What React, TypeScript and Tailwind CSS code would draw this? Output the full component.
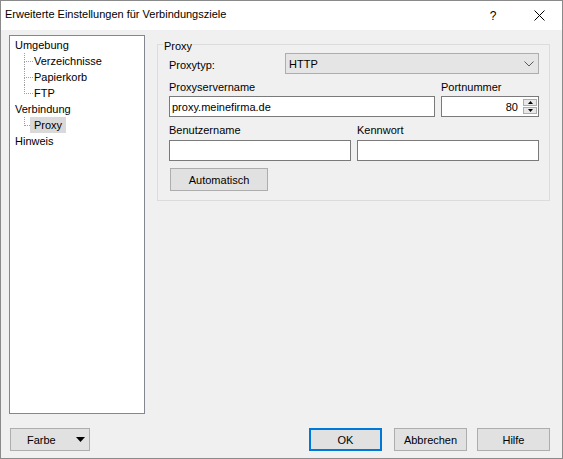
import React from "react";

function Child({ label, last, selected }: { label: string; last?: boolean; selected?: boolean }) {
  return (
    <div className="flex h-[16px] ml-[9px]">
      <div className={selected ? "flex flex-col w-[6px]" : "flex flex-col w-[9px]"}>
        <div className="h-[9px] border-l border-b border-dotted border-[#a0a0a0]" />
        <div className={last ? "flex-1" : "flex-1 border-l border-dotted border-[#a0a0a0]"} />
      </div>
      <span className={selected ? "bg-[#d9d9d9] px-[4px]" : "pl-[1px]"}>{label}</span>
    </div>
  );
}

function Btn({ children, className }: { children: React.ReactNode; className: string }) {
  return (
    <div className={"h-[23px] flex items-center justify-center bg-[#e1e1e1] " + className}>{children}</div>
  );
}

export default function App() {
  return (
    <div className="w-[563px] h-[459px] border border-[#8a8a8a] bg-[#f0f0f0] flex flex-col font-['Liberation_Sans',sans-serif] text-[11px] leading-[16px] text-black">
      {/* Title bar */}
      <div className="h-[29px] bg-white flex items-start shrink-0">
        <div className="pl-[4px] pt-[5px] text-[11px]">Erweiterte Einstellungen für Verbindungsziele</div>
        <div className="ml-auto flex">
          <div className="w-[46px] h-[29px] flex items-center justify-center text-[12px]">?</div>
          <div className="w-[46px] h-[29px] flex items-center justify-center">
            <svg width="11" height="11" viewBox="0 0 11 11">
              <path d="M0.5 0.5 L10.5 10.5 M10.5 0.5 L0.5 10.5" stroke="#000" strokeWidth="1" fill="none" />
            </svg>
          </div>
        </div>
      </div>

      {/* Main */}
      <div className="flex pl-[8px] pt-[5px]">
        <div className="w-[136px] h-[379px] border border-[#828790] bg-white pt-[1px] pl-[5px]">
          <div className="h-[16px]">Umgebung</div>
          <Child label="Verzeichnisse" />
          <Child label="Papierkorb" />
          <Child label="FTP" last />
          <div className="h-[16px]">Verbindung</div>
          <Child label="Proxy" last selected />
          <div className="h-[16px]">Hinweis</div>
        </div>

        <div className="ml-[12px] mt-[9px] w-[393px] h-[157px] border border-[#dcdcdc] relative pt-[8px] pl-[11px] pr-[10px]">
          <span className="absolute left-[5px] top-[-7px] px-[1px] bg-[#f0f0f0]">Proxy</span>

          <div className="flex items-center h-[21px]">
            <div className="w-[116px] pt-[2px]">Proxytyp:</div>
            <div className="w-[254px] h-[21px] border border-[#adadad] bg-[#e5e5e5] flex items-center pl-[3px]">
              <span>HTTP</span>
              <svg className="ml-auto mr-[4px]" width="10" height="6" viewBox="0 0 10 6">
                <path d="M0.5 0.5 L5 5 L9.5 0.5" stroke="#5a5a5a" strokeWidth="1" fill="none" />
              </svg>
            </div>
          </div>

          <div className="flex mt-[5px]">
            <div className="w-[272px]">Proxyservername</div>
            <div>Portnummer</div>
          </div>
          <div className="flex mt-[1px] gap-[6px]">
            <div className="w-[266px] h-[21px] border border-[#7a7a7a] bg-white flex items-center pl-[2px]">
              proxy.meinefirma.de
            </div>
            <div className="w-[98px] h-[21px] border border-[#7a7a7a] bg-white flex items-center">
              <span className="flex-1 text-right">80</span>
              <div className="flex flex-col gap-[1px] ml-[5px] mr-[1px]">
                <div className="w-[14px] h-[7px] border border-[#adadad] bg-[#e8e8e8] flex items-center justify-center">
                  <svg width="5" height="3" viewBox="0 0 5 3">
                    <path d="M0 3 L2.5 0 L5 3 Z" fill="#000" />
                  </svg>
                </div>
                <div className="w-[14px] h-[7px] border border-[#adadad] bg-[#e8e8e8] flex items-center justify-center">
                  <svg width="5" height="3" viewBox="0 0 5 3">
                    <path d="M0 0 L5 0 L2.5 3 Z" fill="#000" />
                  </svg>
                </div>
              </div>
            </div>
          </div>

          <div className="flex mt-[5px]">
            <div className="w-[188px]">Benutzername</div>
            <div>Kennwort</div>
          </div>
          <div className="flex mt-[2px] gap-[6px]">
            <div className="w-[182px] h-[21px] border border-[#7a7a7a] bg-white" />
            <div className="w-[182px] h-[21px] border border-[#7a7a7a] bg-white" />
          </div>

          <div className="mt-[7px] ml-[1px]">
            <Btn className="w-[98px] border border-[#adadad]">Automatisch</Btn>
          </div>
        </div>
      </div>

      {/* Footer */}
      <div className="flex mt-[14px] pl-[9px] pr-[12px] h-[23px]">
        <div className="w-[80px] h-[23px] border border-[#adadad] bg-[#e1e1e1] flex items-center pl-[16px]">
          <span>Farbe</span>
          <svg className="ml-auto mr-[4px]" width="9" height="5" viewBox="0 0 9 5">
            <path d="M0 0 L9 0 L4.5 5 Z" fill="#000" />
          </svg>
        </div>
        <Btn className="ml-auto w-[73px] border-2 border-[#0078d7]">OK</Btn>
        <Btn className="ml-[12px] w-[73px] border border-[#adadad]">Abbrechen</Btn>
        <Btn className="ml-[10px] w-[73px] border border-[#adadad]">Hilfe</Btn>
      </div>
    </div>
  );
}
